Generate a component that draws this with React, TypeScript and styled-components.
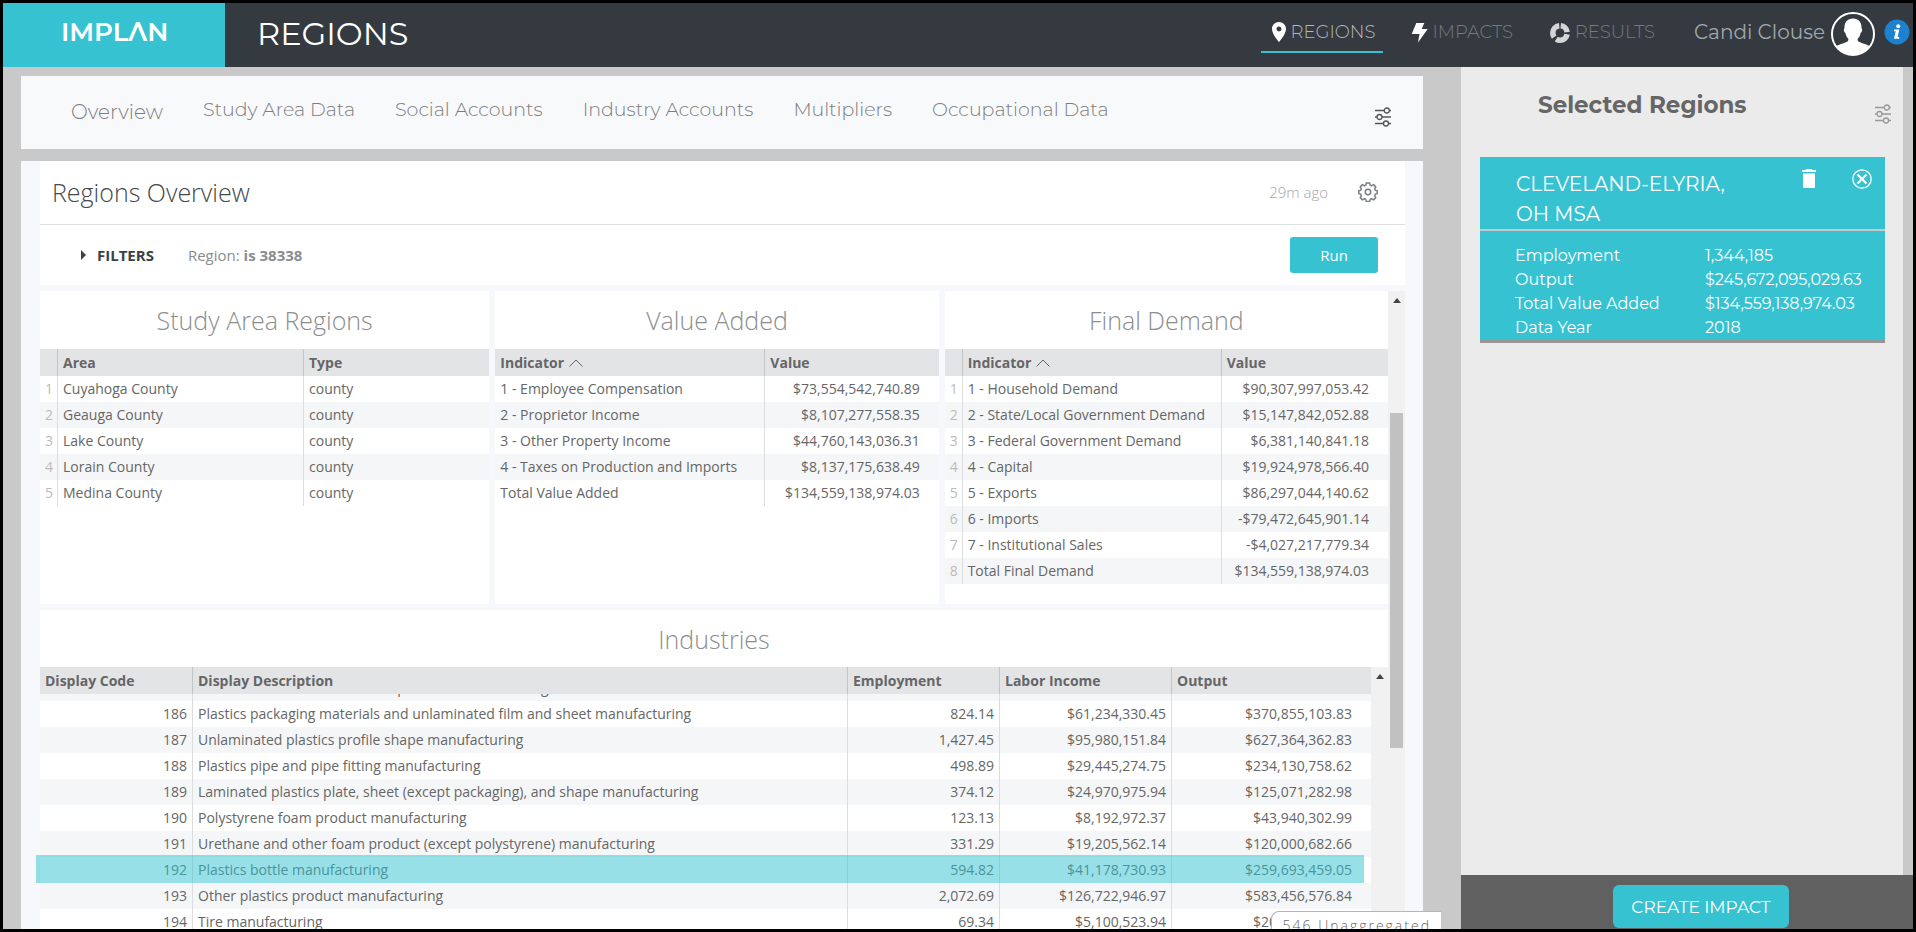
import React, { useLayoutEffect, useRef } from "react";
import styled, { createGlobalStyle } from "styled-components";
import { MdLocationOn } from "react-icons/md";

const brand = "#37c2d2";
const display = `"Montserrat", "Inter", "Liberation Sans", sans-serif`;
const body = `"Open Sans", "Noto Sans", "Liberation Sans", sans-serif`;

const GlobalStyle = createGlobalStyle`
  *, *::before, *::after { box-sizing: border-box; }
  body { margin: 0; background: #000; font-family: ${body}; font-size: 14px; color: #666; }
  h1, h2, h3, p, dl, dd, dt { margin: 0; font-weight: inherit; }
  button { font: inherit; border: 0; padding: 0; background: none; cursor: pointer; }
  a { text-decoration: none; color: inherit; }
  svg { display: block; flex: none; }
`;

const Frame = styled.div`
  display: flex;
  flex-direction: column;
  height: 100vh;
  border: 3px solid #000;
  background: #c9c9c9;
  overflow: hidden;
`;

const TopBar = styled.header`
  display: flex;
  flex: none;
  height: 64px;
  background: #343a40;
  font-family: ${display};
`;

const Logo = styled.a`
  width: 222px;
  padding: 13px 0 0 58px;
  background: ${brand};
  color: #fff;
  font-size: 26px;
  line-height: 32px;
  font-weight: 600;
`;

const PageTitle = styled.h1`
  flex: 1;
  padding-left: 32px;
  color: #fff;
  font-size: 32px;
  line-height: 62px;
  font-weight: 400;
`;

const TopNav = styled.nav`
  display: flex;
  gap: 18px;
  padding-top: 10px;
`;

const TopLink = styled.a<{ $active?: boolean }>`
  display: flex;
  align-items: center;
  height: 40px;
  padding: 0 8px 0 6px;
  border-bottom: 2px solid ${(p) => (p.$active ? brand : "transparent")};
  color: ${(p) => (p.$active ? "#b4b7ba" : "#757a7e")};
  font-size: 18px;
  font-weight: 300;
`;

const User = styled.div`
  display: flex;
  align-items: flex-start;
  margin-left: 31px;
  padding: 9px 3px 0 0;
  color: #a3a7aa;
  font-size: 20px;
  line-height: 40px;
`;

const Avatar = styled.button`
  margin: 0 9px 0 6px;
`;

const InfoButton = styled.button`
  margin-top: 7px;
`;

const Workspace = styled.div`
  display: flex;
  flex: 1;
  min-height: 0;
`;

const Content = styled.main`
  position: relative;
  display: flex;
  flex-direction: column;
  flex: 1;
  min-width: 0;
  gap: 12px;
  padding: 9px 38px 0 18px;
`;

const TabBar = styled.nav`
  display: flex;
  align-items: center;
  flex: none;
  gap: 40px;
  height: 73px;
  padding: 0 31px 6px 50px;
  background: #f8f9fb;
  font-family: ${display};
  color: #7c7c7c;
`;

const Tab = styled.a<{ $active?: boolean }>`
  font-size: ${(p) => (p.$active ? 20 : 19)}px;
  font-weight: 300;
  line-height: 24px;
  padding-top: ${(p) => (p.$active ? 4 : 0)}px;
`;

const TabSettings = styled.button`
  margin-left: auto;
  padding-top: 14px;
`;

const Board = styled.section`
  display: flex;
  flex-direction: column;
  flex: 1;
  min-height: 0;
  padding: 0 18px 0 19px;
  background: #f6f8fb;
`;

const BoardHead = styled.div`
  display: flex;
  align-items: center;
  flex: none;
  height: 64px;
  padding: 0 27px 2px 12px;
  border-bottom: 1px solid #dfe0e1;
  background: #fff;
`;

const BoardTitle = styled.h2`
  flex: 1;
  color: #44494c;
  font-size: 25px;
  font-weight: 300;
  line-height: 32px;
`;

const Ago = styled.span`
  margin-right: 30px;
  color: #a3a6a8;
  font-size: 15px;
  font-weight: 300;
`;

const FilterBar = styled.div`
  display: flex;
  align-items: center;
  flex: none;
  height: 60px;
  padding: 0 27px 0 41px;
  background: #fff;
  font-size: 15px;
`;

const FilterToggle = styled.button`
  display: flex;
  align-items: center;
  gap: 11px;
  margin-right: 34px;
  color: #3a4245;
  font-weight: 700;
`;

const FilterText = styled.p`
  flex: 1;
  color: #8a8d8f;
`;

const RunButton = styled.button`
  width: 88px;
  height: 36px;
  border-radius: 3px;
  background: ${brand};
  color: #fff;
  font-weight: 500;
`;

const BoardScroll = styled.div`
  display: flex;
  flex: 1;
  min-height: 0;
  margin-top: 6px;
`;

const Tiles = styled.div`
  display: flex;
  flex-direction: column;
  flex: 1;
  min-width: 0;
  gap: 6px;
`;

const TileRow = styled.div`
  display: grid;
  grid-template-columns: 449fr 443fr 443fr;
  flex: none;
  gap: 6px;
  height: 313px;
`;

const Tile = styled.section`
  position: relative;
  display: flex;
  flex-direction: column;
  min-width: 0;
  min-height: 0;
  background: #fff;
`;

const WideTile = styled(Tile)`
  flex: 1;
`;

const TileTitle = styled.h3`
  flex: none;
  padding-top: 12px;
  height: 58px;
  color: #8b8e90;
  font-size: 25px;
  font-weight: 300;
  line-height: 34px;
  text-align: center;
`;

const WideTileTitle = styled(TileTitle)`
  height: 57px;
`;

const Table = styled.table`
  width: 100%;
  table-layout: fixed;
  border-collapse: separate;
  border-spacing: 0;
`;

const Col = styled.col<{ $w?: string }>`
  width: ${(p) => p.$w ?? "auto"};
`;

const Th = styled.th`
  position: sticky;
  top: 0;
  height: 27px;
  padding: 0 5px;
  background: #e3e4e6;
  color: #666;
  font-weight: 700;
  line-height: 26px;
  text-align: left;
  white-space: nowrap;
  & + & { border-left: 1px solid #c4c5c7; }
`;

const SortLabel = styled.button`
  display: flex;
  align-items: center;
  gap: 5px;
  font-weight: 700;
  color: inherit;
`;

const Td = styled.td<{ $align?: "right"; $end?: number; $faint?: boolean }>`
  height: 26px;
  padding: 0 ${(p) => p.$end ?? 5}px 0 5px;
  color: ${(p) => (p.$faint ? "#bbb" : "#666")};
  line-height: 26px;
  text-align: ${(p) => p.$align ?? "left"};
  white-space: nowrap;
  & + & { border-left: 1px solid #dcdddf; }
`;

const Tr = styled.tr<{ $shade: boolean }>`
  background: ${(p) => (p.$shade ? "#f5f6f7" : "#fff")};
`;

const IndustryArea = styled.div`
  display: flex;
  flex: 1;
  min-height: 0;
`;

const IndustryScroll = styled.div`
  flex: 1;
  min-width: 0;
  overflow: hidden;
`;

const Track = styled.div`
  display: flex;
  flex-direction: column;
  align-items: center;
  flex: none;
  width: 17px;
  padding-top: 7px;
  background: #f1f1f1;
`;

const Thumb = styled.div`
  width: 13px;
  height: 335px;
  margin-top: 110px;
  background: #c1c1c1;
`;

const Highlight = styled.div`
  position: absolute;
  top: 245px;
  left: -4px;
  right: 24px;
  height: 28px;
  background: rgba(48, 194, 207, 0.5);
`;

const CountBadge = styled.div`
  position: absolute;
  right: 20px;
  bottom: 0;
  height: 18px;
  padding: 4px 10px 0 11px;
  border-top: 1px solid #b5b5b5;
  border-left: 1px solid #b5b5b5;
  border-top-left-radius: 8px;
  background: #fff;
  overflow: hidden;
  color: #666;
  font-size: 14px;
  font-weight: 300;
  line-height: 20px;
  letter-spacing: 2px;
  white-space: nowrap;
`;

const Sidebar = styled.aside`
  display: flex;
  flex-direction: column;
  flex: none;
  width: 452px;
  font-family: ${display};
`;

const SideBody = styled.div`
  flex: 1;
  margin-right: 10px;
  padding: 0 18px 0 19px;
  background: #ebebeb;
`;

const SideHead = styled.div`
  display: flex;
  align-items: center;
  height: 90px;
  padding: 4px 0 0 58px;
`;

const SideTitle = styled.h2`
  flex: 1;
  padding-bottom: 18px;
  color: #666;
  font-size: 23px;
  font-weight: 700;
`;

const SideSettings = styled.button`
  margin-right: -7px;
`;

const RegionCard = styled.article`
  background: ${brand};
  border-bottom: 3px solid #969696;
  color: #fff;
`;

const RegionHead = styled.div`
  display: flex;
  align-items: flex-start;
  height: 74px;
  padding: 12px 13px 0 36px;
  border-bottom: 2px solid #c5cacb;
`;

const RegionName = styled.h3`
  flex: 1;
  padding-right: 40px;
  font-size: 20px;
  line-height: 30px;
`;

const DeleteButton = styled.button`
  margin-right: 36px;
`;

const Facts = styled.dl`
  display: grid;
  grid-template-columns: 190px 1fr;
  padding: 13px 0 0 35px;
  font-size: 16px;
  line-height: 24px;
`;

const SideFoot = styled.footer`
  flex: none;
  height: 54px;
  padding: 10px 0 0 152px;
  background: #606060;
`;

const CreateButton = styled.button`
  width: 176px;
  height: 43px;
  border-radius: 6px;
  background: ${brand};
  color: #fff;
  font-size: 17px;
  font-weight: 400;
`;

const SlidersIcon = ({ color }: { color: string }) => (
  <svg width="17" height="20" viewBox="0 0 17 20" fill="none" stroke={color} strokeWidth="1.3">
    <path d="M0 3.500h9M14.500 3.500H16M0 10h2M7 10h9M0 16.500h8.500M13.500 16.500H16" />
    <circle cx="11.800" cy="3.500" r="2.500" />
    <circle cx="4.500" cy="10" r="2.500" />
    <circle cx="11" cy="16.500" r="2.500" />
  </svg>
);

const BoltIcon = () => (
  <svg width="25" height="24" viewBox="0 0 25 24" fill="#fff">
    <path d="M9.300 3h8l-2.600 6h6L11 22.500l1.500-8.500H4.700z" />
  </svg>
);

const DonutIcon = () => (
  <svg width="30" height="22" viewBox="0 0 30 22">
    <circle
      cx="15"
      cy="12"
      r="7.200"
      fill="none"
      stroke="#d3d5d6"
      strokeWidth="5.600"
      pathLength="360"
      strokeDasharray="0 6 76 18 112 22 120 6"
      transform="rotate(-90 15 12)"
    />
  </svg>
);

const AvatarIcon = () => (
  <svg width="44" height="44" viewBox="0 0 44 44">
    <clipPath id="avatar-clip"><circle cx="22" cy="22" r="21" /></clipPath>
    <circle cx="22" cy="22" r="21" fill="#343a40" stroke="#fff" strokeWidth="2" />
    <path
      clipPath="url(#avatar-clip)"
      fill="#fff"
      d="M22 6.500c5.500 0 8.500 3.500 8.500 9 0 1 .8 1.500.6 3-.2 1.500-1 2-1.500 2.500-.5 3-1.600 4.500-3 6 0 2 .4 2.500 3 3.500 5 2 9 2.500 11.400 5.500V44H3v-8c2.400-3 6.400-3.500 11.400-5.500 2.600-1 3-1.500 3-3.500-1.400-1.500-2.500-3-3-6-.5-.5-1.300-1-1.500-2.500-.2-1.500.6-2 .6-3 0-5.500 3-9 8.500-9z"
    />
  </svg>
);

const InfoIcon = () => (
  <svg width="26" height="26" viewBox="0 0 26 26">
    <circle cx="13" cy="13" r="12.500" fill="#1c82cf" />
    <circle cx="14.200" cy="7.200" r="2" fill="#fff" />
    <path d="M10 10.500h5.300l-1.700 7.500h1.600v1.800h-5.200l1.700-7.500H10z" fill="#fff" />
  </svg>
);

const GearIcon = () => (
  <svg width="20" height="20" viewBox="0 0 20 20" fill="none" stroke="#7b7e80" strokeWidth="1.500" strokeLinejoin="round">
    <path d="M8.300 1h3.400l.6 2.300 1.200.5 2-1.200 2.300 2.300-1.200 2 .6 1.300 2 .6v2.800l-2 .7-.6 1.300 1.200 2-2.300 2.300-2-1.200-1.200.5-.6 2.300H8.300l-.6-2.300-1.200-.5-2 1.200-2.300-2.300 1.200-2-.6-1.300-2-.7V8.800l2-.6.6-1.300-1.200-2 2.300-2.300 2 1.200 1.200-.5z" />
    <circle cx="10" cy="10" r="2.700" />
  </svg>
);

const TrashIcon = () => (
  <svg width="14" height="20" viewBox="0 0 14 20" fill="#fff">
    <path d="M4 1V0h6v1h4v2H0V1zM1 4.500h12V18a1 1 0 0 1-1 1H2a1 1 0 0 1-1-1z" />
  </svg>
);

const CloseIcon = () => (
  <svg width="20" height="20" viewBox="0 0 20 20" fill="none" stroke="#fff">
    <circle cx="10" cy="10" r="9.200" strokeWidth="1.300" />
    <path d="M5.500 5.500l9 9M14.500 5.500l-9 9" strokeWidth="2.200" />
  </svg>
);

const CaretUp = () => (
  <svg width="8" height="5" viewBox="0 0 8 5" fill="#444"><path d="M0 5l4-5 4 5z" /></svg>
);

const CaretRight = () => (
  <svg width="5" height="10" viewBox="0 0 5 10" fill="#3a4245"><path d="M0 0l5 5-5 5z" /></svg>
);

const SortIcon = () => (
  <svg width="14" height="8" viewBox="0 0 14 8" fill="none" stroke="#666"><path d="M.5 7.500L7 1l6.500 6.500" /></svg>
);

const tabs = ["Overview", "Study Area Data", "Social Accounts", "Industry Accounts", "Multipliers", "Occupational Data"];

const counties = ["Cuyahoga", "Geauga", "Lake", "Lorain", "Medina"];

const valueAdded = [
  ["1 - Employee Compensation", "$73,554,542,740.89"],
  ["2 - Proprietor Income", "$8,107,277,558.35"],
  ["3 - Other Property Income", "$44,760,143,036.31"],
  ["4 - Taxes on Production and Imports", "$8,137,175,638.49"],
  ["Total Value Added", "$134,559,138,974.03"],
];

const finalDemand = [
  ["1 - Household Demand", "$90,307,997,053.42"],
  ["2 - State/Local Government Demand", "$15,147,842,052.88"],
  ["3 - Federal Government Demand", "$6,381,140,841.18"],
  ["4 - Capital", "$19,924,978,566.40"],
  ["5 - Exports", "$86,297,044,140.62"],
  ["6 - Imports", "-$79,472,645,901.14"],
  ["7 - Institutional Sales", "-$4,027,217,779.34"],
  ["Total Final Demand", "$134,559,138,974.03"],
];

const industries = [
  ["185", "Other miscellaneous chemical product manufacturing", "", "", ""],
  ["186", "Plastics packaging materials and unlaminated film and sheet manufacturing", "824.14", "$61,234,330.45", "$370,855,103.83"],
  ["187", "Unlaminated plastics profile shape manufacturing", "1,427.45", "$95,980,151.84", "$627,364,362.83"],
  ["188", "Plastics pipe and pipe fitting manufacturing", "498.89", "$29,445,274.75", "$234,130,758.62"],
  ["189", "Laminated plastics plate, sheet (except packaging), and shape manufacturing", "374.12", "$24,970,975.94", "$125,071,282.98"],
  ["190", "Polystyrene foam product manufacturing", "123.13", "$8,192,972.37", "$43,940,302.99"],
  ["191", "Urethane and other foam product (except polystyrene) manufacturing", "331.29", "$19,205,562.14", "$120,000,682.66"],
  ["192", "Plastics bottle manufacturing", "594.82", "$41,178,730.93", "$259,693,459.05"],
  ["193", "Other plastics product manufacturing", "2,072.69", "$126,722,946.97", "$583,456,576.84"],
  ["194", "Tire manufacturing", "69.34", "$5,100,523.94", "$20,000,000.00"],
];

const facts = [
  ["Employment", "1,344,185"],
  ["Output", "$245,672,095,029.63"],
  ["Total Value Added", "$134,559,138,974.03"],
  ["Data Year", "2018"],
];

const IndicatorHead = () => (
  <Th><SortLabel>Indicator <SortIcon /></SortLabel></Th>
);

export default function App() {
  const scroller = useRef<HTMLDivElement>(null);
  useLayoutEffect(() => {
    if (scroller.current) scroller.current.scrollTop = 19;
  }, []);

  return (
    <Frame>
      <GlobalStyle />
      <TopBar>
        <Logo href="#" aria-label="IMPLAN">IMPLΛN</Logo>
        <PageTitle>REGIONS</PageTitle>
        <TopNav>
          <TopLink href="#regions" $active><MdLocationOn size={24} color="#fff" />REGIONS</TopLink>
          <TopLink href="#impacts"><BoltIcon />IMPACTS</TopLink>
          <TopLink href="#results"><DonutIcon />RESULTS</TopLink>
        </TopNav>
        <User>
          <span>Candi Clouse</span>
          <Avatar aria-label="Account"><AvatarIcon /></Avatar>
          <InfoButton aria-label="Information"><InfoIcon /></InfoButton>
        </User>
      </TopBar>
      <Workspace>
        <Content>
          <TabBar>
            {tabs.map((t, i) => <Tab key={t} href="#" $active={i === 0}>{t}</Tab>)}
            <TabSettings aria-label="Settings"><SlidersIcon color="#555" /></TabSettings>
          </TabBar>
          <Board>
            <BoardHead>
              <BoardTitle>Regions Overview</BoardTitle>
              <Ago>29m ago</Ago>
              <button aria-label="Dashboard settings"><GearIcon /></button>
            </BoardHead>
            <FilterBar>
              <FilterToggle><CaretRight />FILTERS</FilterToggle>
              <FilterText>Region: <b>is 38338</b></FilterText>
              <RunButton>Run</RunButton>
            </FilterBar>
            <BoardScroll>
              <Tiles>
                <TileRow>
                  <Tile>
                    <TileTitle>Study Area Regions</TileTitle>
                    <Table>
                      <colgroup><Col $w="17px" /><Col $w="246px" /><Col /></colgroup>
                      <thead><tr><Th /><Th>Area</Th><Th>Type</Th></tr></thead>
                      <tbody>
                        {counties.map((c, i) => (
                          <Tr key={c} $shade={i % 2 === 1}>
                            <Td $faint>{i + 1}</Td><Td>{c} County</Td><Td>county</Td>
                          </Tr>
                        ))}
                      </tbody>
                    </Table>
                  </Tile>
                  <Tile>
                    <TileTitle>Value Added</TileTitle>
                    <Table>
                      <colgroup><Col $w="269px" /><Col /></colgroup>
                      <thead><tr><IndicatorHead /><Th>Value</Th></tr></thead>
                      <tbody>
                        {valueAdded.map(([name, value], i) => (
                          <Tr key={name} $shade={i % 2 === 1}>
                            <Td>{name}</Td><Td $align="right" $end={19}>{value}</Td>
                          </Tr>
                        ))}
                      </tbody>
                    </Table>
                  </Tile>
                  <Tile>
                    <TileTitle>Final Demand</TileTitle>
                    <Table>
                      <colgroup><Col $w="17px" /><Col $w="259px" /><Col /></colgroup>
                      <thead><tr><Th /><IndicatorHead /><Th>Value</Th></tr></thead>
                      <tbody>
                        {finalDemand.map(([name, value], i) => (
                          <Tr key={name} $shade={i % 2 === 1}>
                            <Td $faint>{i + 1}</Td><Td>{name}</Td><Td $align="right" $end={19}>{value}</Td>
                          </Tr>
                        ))}
                      </tbody>
                    </Table>
                  </Tile>
                </TileRow>
                <WideTile>
                  <WideTileTitle>Industries</WideTileTitle>
                  <IndustryArea>
                    <IndustryScroll ref={scroller}>
                      <Table>
                        <colgroup><Col $w="152px" /><Col /><Col $w="152px" /><Col $w="172px" /><Col $w="200px" /></colgroup>
                        <thead>
                          <tr><Th>Display Code</Th><Th>Display Description</Th><Th>Employment</Th><Th>Labor Income</Th><Th>Output</Th></tr>
                        </thead>
                        <tbody>
                          {industries.map(([code, name, jobs, income, output], i) => (
                            <Tr key={code} $shade={i % 2 === 0}>
                              <Td $align="right">{code}</Td>
                              <Td>{name}</Td>
                              <Td $align="right">{jobs}</Td>
                              <Td $align="right">{income}</Td>
                              <Td $align="right" $end={19}>{output}</Td>
                            </Tr>
                          ))}
                        </tbody>
                      </Table>
                    </IndustryScroll>
                    <Track><CaretUp /></Track>
                  </IndustryArea>
                  <Highlight />
                </WideTile>
              </Tiles>
              <Track><CaretUp /><Thumb /></Track>
            </BoardScroll>
          </Board>
          <CountBadge>546 Unaggregated</CountBadge>
        </Content>
        <Sidebar>
          <SideBody>
            <SideHead>
              <SideTitle>Selected Regions</SideTitle>
              <SideSettings aria-label="Region settings"><SlidersIcon color="#999" /></SideSettings>
            </SideHead>
            <RegionCard>
              <RegionHead>
                <RegionName>CLEVELAND-ELYRIA, OH MSA</RegionName>
                <DeleteButton aria-label="Delete region"><TrashIcon /></DeleteButton>
                <button aria-label="Close region"><CloseIcon /></button>
              </RegionHead>
              <Facts>
                {facts.map(([k, v]) => (
                  <React.Fragment key={k}><dt>{k}</dt><dd>{v}</dd></React.Fragment>
                ))}
              </Facts>
            </RegionCard>
          </SideBody>
          <SideFoot><CreateButton>CREATE IMPACT</CreateButton></SideFoot>
        </Sidebar>
      </Workspace>
    </Frame>
  );
}
